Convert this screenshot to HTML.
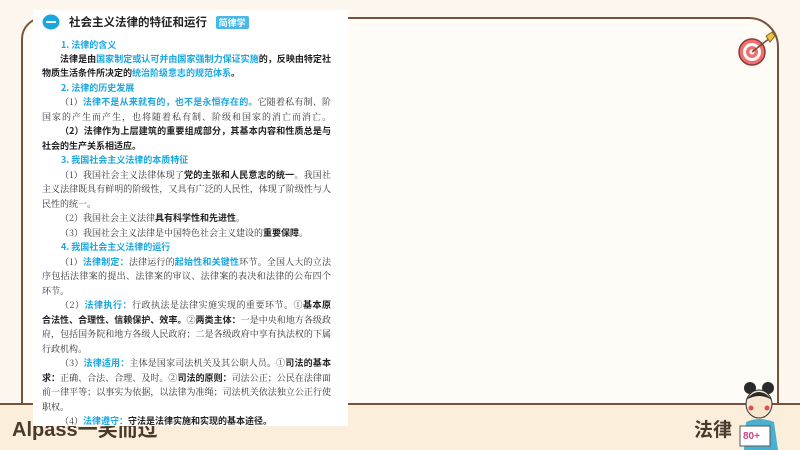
<!DOCTYPE html><html><head><meta charset="utf-8"><style>
*{margin:0;padding:0;box-sizing:border-box}
body{width:800px;height:450px;overflow:hidden;background:#fcf6ee;position:relative;font-family:"Liberation Sans","Noto Sans CJK SC",sans-serif}
.card{position:absolute;left:21px;top:17px;width:758px;height:420px;border:2px solid #76543c;border-radius:22px 30px 22px 22px;background:#fffbf6}
.foot{position:absolute;left:0;top:403px;width:800px;height:47px;background:#fbeedb;border-top:2px solid #76543c}
.foot .l{position:absolute;left:12px;top:8px;font-size:20px;font-weight:bold;color:#4a3a2e}
.foot .r{position:absolute;left:694px;top:10px;font-size:19px;font-weight:bold;color:#4a3a2e}
.img{position:absolute;left:33px;top:10px;width:315px;height:416px;background:#fff;font-family:"Noto Serif CJK SC","Liberation Serif",serif;font-size:9px;color:#333;line-height:14.5px}
.img p{position:absolute;left:9px;white-space:nowrap}
.img p.f{width:289px;white-space:normal;text-align:justify;text-align-last:justify;height:15px;overflow:hidden}
.b{font-family:"Noto Sans CJK SC",sans-serif;font-weight:bold;color:#222}
.c{font-family:"Noto Sans CJK SC",sans-serif;font-weight:bold;color:#1aa7e0}
.h{font-family:"Noto Sans CJK SC",sans-serif;font-weight:bold;color:#1aa7e0}
.ind{text-indent:18px}
</style></head><body>
<div class="card"></div>
<div class="foot"><div class="l">Alpass一笑而过</div><div class="r">法律</div></div>
<svg style="position:absolute;left:738px;top:30px" width="40" height="40" viewBox="0 0 40 40"><circle cx="14" cy="22" r="13" fill="#f07070" stroke="#8a3a3a" stroke-width="1.5"/><circle cx="14" cy="22" r="9" fill="#fff"/><circle cx="14" cy="22" r="6" fill="#f07070"/><circle cx="14" cy="22" r="2.5" fill="#fff"/><line x1="14" y1="22" x2="32" y2="8" stroke="#6a4a30" stroke-width="1.5"/><path d="M28 6 L34 2 L37 6 L32 12Z" fill="#f0c040" stroke="#8a6a20" stroke-width="1"/></svg>
<svg style="position:absolute;left:738px;top:380px" width="50" height="70" viewBox="0 0 50 70"><circle cx="12" cy="8" r="6" fill="#2a2a2a"/><circle cx="30" cy="8" r="6" fill="#2a2a2a"/><ellipse cx="21" cy="24" rx="13" ry="14" fill="#f6e6d0" stroke="#333"/><path d="M8 20 Q21 4 34 20 Q21 12 8 20Z" fill="#2a2a2a"/><circle cx="13" cy="28" r="2.5" fill="#e05050"/><circle cx="29" cy="28" r="2.5" fill="#e05050"/><path d="M8 42 Q21 36 36 42 L40 70 L6 70Z" fill="#4ab0d0"/><rect x="2" y="46" width="30" height="20" fill="#fff" stroke="#555"/><text x="5" y="59" font-size="10" font-weight="bold" fill="#d04080" font-family="Liberation Sans">80+</text></svg>
<div class="img">
<svg style="position:absolute;left:9px;top:3px" width="20" height="18"><ellipse cx="9" cy="9" rx="8.5" ry="7.5" fill="#1aa7e0"/><rect x="4" y="8" width="10" height="2" fill="#fff"/></svg>
<p style="top:5px;left:36px;font-family:'Noto Sans CJK SC',sans-serif;font-weight:bold;font-size:11.5px;color:#222">社会主义法律的特征和运行 <span style="background:#4ab8e6;color:#fff;font-size:9px;padding:0 3px;margin-left:6px;border-radius:2px">简律学</span></p>
<p class="h" style="top:28px;left:28px">1. 法律的含义</p>
<p class="b ind f" style="top:42px">法律是由<span class="c">国家制定或认可并由国家强制力保证实施</span>的，反映由特定社会</p>
<p class="b" style="top:56px">物质生活条件所决定的<span class="c">统治阶级意志的规范体系</span>。</p>
<p class="h" style="top:71px;left:28px">2. 法律的历史发展</p>
<p class="ind f" style="top:85px">（1）<span class="c">法律不是从来就有的，也不是永恒存在的。</span>它随着私有制、阶级和</p>
<p class="f" style="top:100px">国家的产生而产生，也将随着私有制、阶级和国家的消亡而消亡。</p>
<p class="ind b f" style="top:114px">（2）法律作为上层建筑的重要组成部分，其基本内容和性质总是与所在</p>
<p class="b" style="top:129px">社会的生产关系相适应。</p>
<p class="h" style="top:143px;left:28px">3. 我国社会主义法律的本质特征</p>
<p class="ind f" style="top:158px">（1）我国社会主义法律体现了<span class="b">党的主张和人民意志的统一</span>。我国社会</p>
<p class="f" style="top:172px">主义法律既具有鲜明的阶级性，又具有广泛的人民性，体现了阶级性与人</p>
<p style="top:187px">民性的统一。</p>
<p class="ind" style="top:201px">（2）我国社会主义法律<span class="b">具有科学性和先进性</span>。</p>
<p class="ind" style="top:216px">（3）我国社会主义法律是中国特色社会主义建设的<span class="b">重要保障</span>。</p>
<p class="h" style="top:230px;left:28px">4. 我国社会主义法律的运行</p>
<p class="ind f" style="top:245px">（1）<span class="c">法律制定：</span>法律运行的<span class="c">起始性和关键性</span>环节。全国人大的立法程</p>
<p class="f" style="top:259px">序包括法律案的提出、法律案的审议、法律案的表决和法律的公布四个</p>
<p style="top:274px">环节。</p>
<p class="ind f" style="top:288px">（2）<span class="c">法律执行：</span>行政执法是法律实施实现的重要环节。①<span class="b">基本原则：</span></p>
<p class="f" style="top:303px"><span class="b">合法性、合理性、信赖保护、效率。</span>②<span class="b">两类主体：</span>一是中央和地方各级政</p>
<p class="f" style="top:317px">府，包括国务院和地方各级人民政府；二是各级政府中享有执法权的下属</p>
<p style="top:332px">行政机构。</p>
<p class="ind f" style="top:346px">（3）<span class="c">法律适用：</span>主体是国家司法机关及其公职人员。①<span class="b">司法的基本要</span></p>
<p class="f" style="top:361px"><span class="b">求：</span>正确、合法、合理、及时。②<span class="b">司法的原则：</span>司法公正；公民在法律面</p>
<p class="f" style="top:375px">前一律平等；以事实为依据，以法律为准绳；司法机关依法独立公正行使</p>
<p style="top:390px">职权。</p>
<p class="ind" style="top:404px">（4）<span class="c">法律遵守：</span><span class="b">守法是法律实施和实现的基本途径。</span></p>
</div>
</body></html>
